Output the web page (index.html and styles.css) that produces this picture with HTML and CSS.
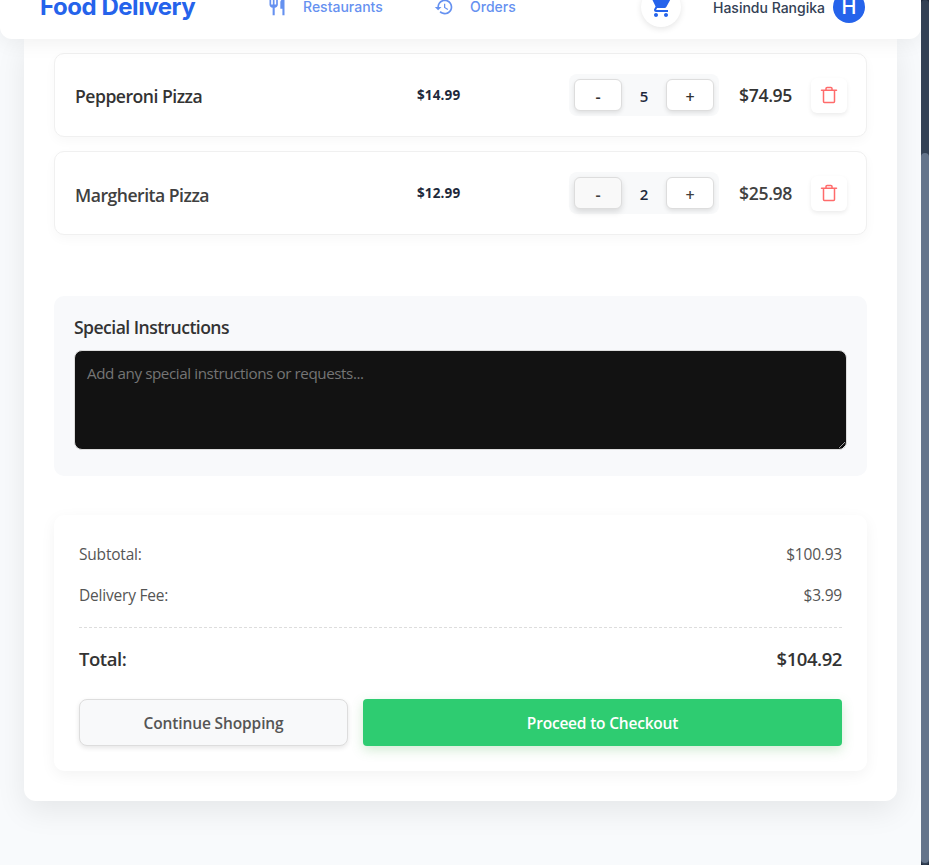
FILE: index.html
```html
<!DOCTYPE html>
<html lang="en">
<head>
<meta charset="utf-8">
<title>Food Delivery - Cart</title>
<link rel="stylesheet" href="styles.css">
</head>
<body>
<div class="viewport">
  <div class="page">
    <header class="header">
      <div class="brand"><span>Food Delivery</span></div>
      <nav class="nav">
        <a class="nav-link nav-restaurants"><svg width="24" height="24" viewBox="0 0 24 24"><path d="M11 9H9V2H7v7H5V2H3v7c0 2.120 1.660 3.840 3.750 3.970V22h2.500v-9.030C11.340 12.840 13 11.120 13 9V2h-2v7zm5-3v8h2.500v8H21V2c-2.760 0-5 2.240-5 4z"/></svg><span>Restaurants</span></a>
        <a class="nav-link nav-orders"><svg width="24" height="24" viewBox="0 0 24 24"><path d="M13 3c-4.970 0-9 4.030-9 9H1l3.890 3.890.070.140L9 12H6c0-3.870 3.130-7 7-7s7 3.130 7 7-3.130 7-7 7c-1.930 0-3.680-.790-4.940-2.060l-1.420 1.420C8.270 19.990 10.510 21 13 21c4.970 0 9-4.030 9-9s-4.030-9-9-9zm-1 5v5l4.280 2.540.720-1.210-3.500-2.080V8H12z"/></svg><span>Orders</span></a>
      </nav>
      <div class="cart"><svg width="24" height="24" viewBox="0 0 24 24"><path d="M7 18c-1.100 0-1.990.900-1.990 2S5.900 22 7 22s2-.900 2-2-.900-2-2-2zM1 2v2h2l3.600 7.590-1.350 2.450c-.160.280-.250.610-.250.960 0 1.100.900 2 2 2h12v-2H7.420c-.140 0-.250-.110-.250-.250l.030-.120.900-1.630h7.450c.750 0 1.410-.410 1.750-1.030l3.580-6.490A1 1 0 0 0 20 4H5.210l-.940-2H1zm16 16c-1.100 0-1.990.900-1.990 2s.890 2 1.990 2 2-.900 2-2-.900-2-2-2z"/></svg></div>
      <div class="user"><span class="user-name">Hasindu Rangika</span><span class="avatar">H</span></div>
    </header>
    <main class="card">
      <section class="items">
        <article class="item">
          <h3 class="item-name">Pepperoni Pizza</h3>
          <span class="price">$14.99</span>
          <div class="qty"><button class="step">-</button><span class="count">5</span><button class="step">+</button></div>
          <span class="line-total">$74.95</span>
          <button class="remove"><svg width="18" height="18" viewBox="0 0 18 18"><path d="M1.500 4.200h15M6 4V2.600q0-1.100 1.100-1.100h3.800q1.100 0 1.100 1.100V4M3.500 4.500v11.100q0 .900.900.900h9.200q.900 0 .900-.900V4.500"/></svg></button>
        </article>
        <article class="item item-active">
          <h3 class="item-name">Margherita Pizza</h3>
          <span class="price">$12.99</span>
          <div class="qty"><button class="step step-hover">-</button><span class="count">2</span><button class="step">+</button></div>
          <span class="line-total">$25.98</span>
          <button class="remove"><svg width="18" height="18" viewBox="0 0 18 18"><path d="M1.500 4.200h15M6 4V2.600q0-1.100 1.100-1.100h3.800q1.100 0 1.100 1.100V4M3.500 4.500v11.100q0 .900.900.900h9.200q.900 0 .900-.900V4.500"/></svg></button>
        </article>
      </section>
      <section class="notes">
        <h4 class="notes-title">Special Instructions</h4>
        <textarea class="notes-input" placeholder="Add any special instructions or requests..."></textarea>
      </section>
      <section class="summary">
        <div class="row"><span>Subtotal:</span><span>$100.93</span></div>
        <div class="row"><span>Delivery Fee:</span><span>$3.99</span></div>
        <div class="row total"><span>Total:</span><span>$104.92</span></div>
        <div class="actions">
          <button class="btn btn-continue">Continue Shopping</button>
          <button class="btn btn-checkout">Proceed to Checkout</button>
        </div>
      </section>
    </main>
  </div>
  <div class="scrollbar"><div class="track"><div class="thumb"></div></div></div>
</div>
</body>
</html>
```
FILE: styles.css
```css
* { box-sizing: border-box; margin: 0; }
body { font-family: "Open Sans", "Noto Sans", sans-serif; background: #f8fafc; color: #333; overflow: hidden; }
button { font-family: inherit; padding: 0; }
.viewport { display: flex; height: 865px; }
.page { width: 921px; height: 865px; overflow: hidden; }

.header {
  position: relative; z-index: 2; height: 39px; padding: 0 56px 25px 40px;
  display: flex; align-items: center;
  background: #fff; border-radius: 0 0 12px 12px;
  box-shadow: 0 4px 20px rgba(0, 0, 0, .06);
  font-family: Inter, sans-serif;
}
.brand { width: 225px; font-size: 24px; font-weight: 700; letter-spacing: -.45px; line-height: 30px; color: #2563eb; white-space: nowrap; }
.nav { display: flex; width: 376px; }
.nav-link { display: flex; align-items: center; color: #2563eb; opacity: .7; font-size: 14px; font-weight: 500; line-height: 20px; }
.nav-link svg { fill: #2563eb; width: 20px; height: 20px; }
.nav-restaurants { width: 169px; gap: 16px; padding-left: 2px; }
.nav-orders { gap: 16px; }
.cart { display: flex; align-items: center; justify-content: center; width: 40px; height: 40px; border-radius: 50%; background: #fff; box-shadow: 0 2px 6px rgba(0, 0, 0, .1); }
.cart svg { fill: #2563eb; width: 24px; height: 24px; }
.user { display: flex; align-items: center; gap: 8px; margin-left: auto; }
.user-name { font-size: 14px; font-weight: 500; color: #334155; white-space: nowrap; }
.avatar { display: flex; align-items: center; justify-content: center; width: 32px; height: 32px; border-radius: 50%; background: #2563eb; color: #fff; font-size: 20px; font-weight: 500; }

.card {
  width: 873px; height: 762px; margin: 0 24px; padding: 14px 30px 30px;
  background: #fff; border-radius: 0 0 12px 12px;
  box-shadow: 0 10px 30px rgba(0, 0, 0, .08);
}
.items { display: flex; flex-direction: column; gap: 14px; }
.item {
  height: 84px; padding: 0 19px 0 20px; display: grid; align-items: center;
  grid-template-columns: 342px 152px 150px 1fr 36px;
  border: 1px solid #f0f0f0; border-radius: 10px; background: #fff;
  box-shadow: 0 4px 12px rgba(0, 0, 0, .03);
}
.item-name { font-size: 17.6px; font-weight: 600; letter-spacing: -.5px; line-height: 24px; padding-top: 1px; color: #333; white-space: nowrap; }
.price { font-size: 13.5px; font-weight: 700; letter-spacing: .15px; color: #1e293b; }
.qty { display: flex; align-items: center; width: 150px; height: 42px; padding: 5px; border-radius: 8px; background: #f8f9fa; }
.step { width: 48px; height: 32px; padding-top: 3px; border: 1px solid #ddd; border-radius: 6px; background: #fff; color: #333; font-size: 16px; font-weight: 600; box-shadow: 0 2px 4px rgba(0, 0, 0, .1); }
.step-hover { background: #f9f9f9; box-shadow: 0 3px 6px rgba(0, 0, 0, .13); }
.count { width: 44px; padding-top: 1px; text-align: center; font-size: 15px; font-weight: 600; color: #1e293b; }
.line-total { padding-left: 20px; font-size: 17.6px; font-weight: 600; letter-spacing: -.35px; color: #333; }
.item-active .item-name, .item-active .line-total, .item-active .step { color: #404040; }
.item-active .item-name { padding-top: 3px; }
.remove { display: flex; align-items: center; justify-content: center; width: 36px; height: 35px; border: 0; border-radius: 6px; background: #fff; box-shadow: 0 2px 4px rgba(0, 0, 0, .08); }
.remove path { fill: none; stroke: #ff6b6b; stroke-width: 1.5; stroke-linecap: round; }

.notes { height: 180px; margin-top: 61px; padding: 19px 20px; border-radius: 10px; background: #f8f9fb; }
.notes-title { font-size: 17.6px; font-weight: 600; letter-spacing: -.55px; line-height: 24px; margin-bottom: 11px; color: #333; }
.notes-input { display: block; width: 773px; height: 100px; padding: 11px 12px; border: 1px solid #ddd; border-radius: 8px; background: #121212; color: #fff; font-family: inherit; font-size: 15.2px; letter-spacing: -.41px; line-height: 22px; resize: vertical; }
.notes-input::placeholder { color: #757575; }

.summary { height: 256px; margin-top: 39px; padding: 24px 25px 25px; border-radius: 10px; background: #fff; box-shadow: 0 4px 15px rgba(0, 0, 0, .05); }
.row { display: flex; justify-content: space-between; align-items: center; height: 29px; margin-bottom: 12px; font-size: 15.5px; letter-spacing: -.2px; color: #555; }
.total { height: 64px; margin: 18px 0 8px; padding-bottom: 2px; border-top: 1px dashed #ddd; font-size: 18.5px; font-weight: 600; letter-spacing: -.45px; color: #333; }
.actions { display: flex; gap: 15px; }
.btn { height: 47px; padding-top: 1px; font-size: 15.5px; font-weight: 600; letter-spacing: -.12px; }
.btn-continue { width: 269px; border: 1px solid #ddd; border-radius: 8px; background: #f8f9fa; color: #555; box-shadow: 0 2px 5px rgba(0, 0, 0, .1); }
.btn-checkout { flex: 1; letter-spacing: -.2px; border: 0; border-radius: 4px; background: #2ecc71; color: #fff; box-shadow: 0 4px 12px rgba(76, 175, 80, .25); }

.scrollbar { width: 8px; height: 865px; background: #1e293b; }
.track { height: 865px; padding-top: 153px; border-radius: 4px; background: #334155; }
.thumb { height: 710px; border-radius: 4px; background: #64748b; }
```
